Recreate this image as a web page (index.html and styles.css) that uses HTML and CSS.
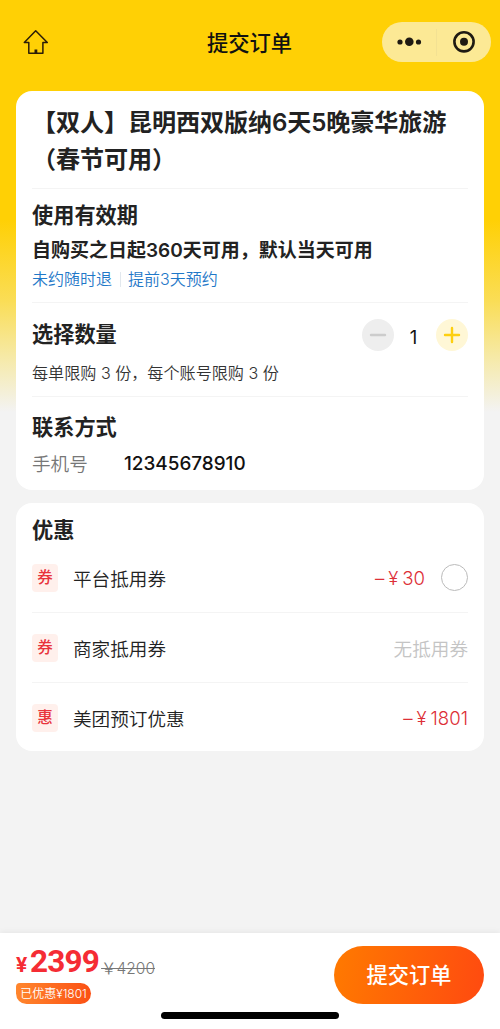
FILE: index.html
```html
<!DOCTYPE html>
<html lang="zh-CN">
<head>
  <meta charset="UTF-8" />
  <meta name="viewport" content="width=device-width, initial-scale=1.0" />
  <title>提交订单</title>
  <link rel="stylesheet" href="styles.css">
</head>
<body>
  <div class="page">
    <header class="navbar">
      <svg class="home" width="26" height="26" viewBox="0 0 26 26">
        <path d="M5.8 13.5H1.3L12.7 1.8 24.3 13.5h-4.4v10.8H5.8z" />
        <path class="door" d="M11.5 20.5h2.8v4h-2.8z" />
      </svg>
      <h1>提交订单</h1>
      <div class="capsule">
        <svg width="54" height="40" viewBox="0 0 54 40">
          <circle cx="18" cy="20" r="2.6" />
          <circle cx="27.3" cy="19.7" r="4.3" />
          <circle cx="36.5" cy="20" r="2.6" />
        </svg>
        <span class="capsule-line"></span>
        <svg width="54" height="40" viewBox="0 0 54 40">
          <circle class="ring" cx="27" cy="19.8" r="9.6" />
          <circle cx="27" cy="19.8" r="4" />
        </svg>
      </div>
    </header>

    <main>
      <div class="card">
        <h2 class="title">【双人】昆明西双版纳6天5晚豪华旅游（春节可用）</h2>
        <section class="validity">
          <h3>使用有效期</h3>
          <p class="valid-text">自购买之日起360天可用，默认当天可用</p>
          <div class="tags"><span>未约随时退</span><span>提前3天预约</span></div>
        </section>
        <section class="quantity">
          <div class="quantity-row">
            <h3>选择数量</h3>
            <div class="stepper">
              <svg class="minus" width="32" height="32" viewBox="0 0 32 32"><path d="M9 16h14" /></svg>
              <span class="count">1</span>
              <svg class="plus" width="32" height="32" viewBox="0 0 32 32"><path d="M9 16h14M16 9v14" /></svg>
            </div>
          </div>
          <p class="limit">每单限购 3 份，每个账号限购 3 份</p>
        </section>
        <section class="contact">
          <h3>联系方式</h3>
          <div class="phone"><span class="phone-label">手机号</span><span class="phone-number">12345678910</span></div>
        </section>
      </div>

      <div class="card discount">
        <h3>优惠</h3>
        <div class="row">
          <span class="badge">券</span>
          <span class="name">平台抵用券</span>
          <span class="amount"><i>–</i><i>¥</i>30</span>
          <span class="radio"></span>
        </div>
        <div class="row">
          <span class="badge">券</span>
          <span class="name">商家抵用券</span>
          <span class="none">无抵用券</span>
        </div>
        <div class="row">
          <span class="badge">惠</span>
          <span class="name">美团预订优惠</span>
          <span class="amount"><i>–</i><i>¥</i>1801</span>
        </div>
      </div>
    </main>

    <footer class="footer">
      <div class="total">
        <div class="prices">
          <span class="yen">¥</span><span class="price">2399</span><span class="old-price">￥4200</span>
        </div>
        <span class="saved">已优惠¥1801</span>
      </div>
      <div class="submit">提交订单</div>
      <div class="indicator"></div>
    </footer>
  </div>
</body>
</html>
```

FILE: styles.css
```css
* {
  box-sizing: border-box;
}
body {
  margin: 0;
  font-family: Inter, "Noto Sans CJK SC", sans-serif;
  color: #222;
}
h1, h2, h3, p {
  margin: 0;
}
.page {
  height: 1029px;
  display: flex;
  flex-direction: column;
  background: linear-gradient(#ffd005 0, #ffd005 220px, #fadd55 300px, #f6e9a4 355px, #f3f3f3 412px);
}
.navbar {
  height: 91px;
  padding: 22px 9px 0 23px;
  display: grid;
  grid-template-columns: 110px 1fr 109px;
  align-items: start;
}
.home {
  margin-top: 7px;
  fill: none;
  stroke: #2b1d08;
  stroke-width: 1.5;
  stroke-linejoin: round;
}
.home .door {
  fill: #2b1d08;
  stroke: none;
}
.navbar h1 {
  font-size: 21.3px;
  font-weight: 500;
  line-height: 42px;
  color: #111;
  text-align: center;
  padding-right: 16px;
}
.capsule {
  height: 40px;
  border-radius: 20px;
  background: #fce995;
  display: flex;
  align-items: center;
  fill: #1f1a12;
}
.capsule-line {
  width: 1px;
  height: 27px;
  background: #f3e193;
}
.ring {
  fill: none;
  stroke: #1f1a12;
  stroke-width: 2.6;
}
main {
  flex: 1;
  padding: 0 16px;
}
.card {
  background: #fff;
  border-radius: 16px;
  padding: 0 16px;
  height: 399px;
}
.title {
  height: 97px;
  padding-top: 13px;
  font-size: 24.1px;
  line-height: 37px;
  font-weight: 600;
  letter-spacing: -0.1px;
}
h3 {
  font-size: 21.2px;
  line-height: 30px;
  font-weight: 600;
}
section {
  border-top: 1px solid #f4f4f4;
}
.validity {
  height: 114px;
  padding-top: 11px;
}
.valid-text {
  font-size: 19px;
  line-height: 28px;
  margin-top: 7px;
  font-weight: 600;
}
.tags {
  display: flex;
  font-size: 16px;
  font-weight: 350;
  line-height: 28px;
  color: #1f78c8;
}
.tags span + span {
  margin-left: 8px;
  padding-left: 8px;
  background: linear-gradient(#e2e8ee, #e2e8ee) 0 7px / 1px 15px no-repeat;
}
.quantity {
  height: 94px;
  padding-top: 16px;
}
.quantity-row {
  display: flex;
  justify-content: space-between;
  height: 32px;
}
.stepper {
  display: flex;
  align-items: center;
}
.stepper svg {
  border-radius: 50%;
  fill: none;
  stroke-width: 2.4;
  stroke-linecap: round;
}
.minus {
  background: #eee;
  stroke: #ccc;
}
.plus {
  background: #fff7d6;
  stroke: #fdcf10;
}
.count {
  width: 42px;
  padding: 3px 3px 0 0;
  font-size: 18.5px;
  text-align: center;
  color: #111;
}
.limit {
  margin-top: 8px;
  font-size: 16.1px;
  font-weight: 350;
  line-height: 28px;
  color: #333;
}
.contact {
  padding-top: 15px;
}
.phone {
  display: flex;
  margin-top: 8px;
  line-height: 28px;
}
.phone-label {
  width: 92px;
  font-size: 18.6px;
  font-weight: 350;
  color: #777;
}
.phone-number {
  font-size: 18.9px;
  font-weight: 500;
  color: #111;
}
.discount {
  margin-top: 13px;
  height: 248px;
  padding-top: 12px;
}
.row {
  height: 70px;
  display: flex;
  align-items: center;
  font-size: 18.6px;
  font-weight: 350;
  border-bottom: 1px solid #f4f4f4;
}
.row:last-child {
  border-color: transparent;
}
.discount h3 {
  margin-bottom: -2px;
}
.badge {
  width: 26px;
  height: 28px;
  margin-right: 15px;
  border-radius: 4px;
  background: #fff0ec;
  color: #e8343c;
  font-size: 15.5px;
  font-weight: 500;
  line-height: 28px;
  text-align: center;
}
.name {
  flex: 1;
}
.amount {
  color: #dd2f37;
}
.amount i {
  font-style: normal;
  margin-right: 4px;
}
.radio {
  width: 27px;
  height: 27px;
  margin-left: 16px;
  border: 1px solid #bbb;
  border-radius: 50%;
}
.none {
  color: #c4c4c4;
}
.footer {
  position: relative;
  height: 96px;
  padding: 13px 16px 0;
  background: #fff;
  box-shadow: 0 -1px 6px rgba(0, 0, 0, 0.06);
  display: flex;
  justify-content: space-between;
  align-items: flex-start;
}
.prices {
  display: flex;
  align-items: baseline;
  height: 37px;
  line-height: 32px;
  color: #f52c34;
}
.yen {
  width: 14px;
  font: bold 21px/32px Roboto, sans-serif;
}
.price {
  font: bold 31.5px/32px Roboto, sans-serif;
  letter-spacing: -0.8px;
}
.old-price {
  position: relative;
  top: 2px;
  margin-left: 2px;
  font-size: 15.5px;
  font-weight: 350;
  color: #777;
  text-decoration: line-through;
}
.saved {
  display: block;
  width: 75px;
  height: 21px;
  border-radius: 4px 11px 11px 11px;
  background: linear-gradient(90deg, #ff862d, #fb5014);
  color: #fff;
  font-size: 12px;
  font-weight: 350;
  line-height: 21px;
  text-align: center;
  white-space: nowrap;
}
.submit {
  width: 150px;
  height: 58px;
  border-radius: 29px;
  background: linear-gradient(100deg, #ff7a00, #ff4a10);
  color: #fff;
  font-size: 21.2px;
  font-weight: 500;
  line-height: 58px;
  text-align: center;
}
.indicator {
  position: absolute;
  left: 161px;
  bottom: 10px;
  width: 178px;
  height: 7px;
  border-radius: 4px;
  background: #000;
}
```
